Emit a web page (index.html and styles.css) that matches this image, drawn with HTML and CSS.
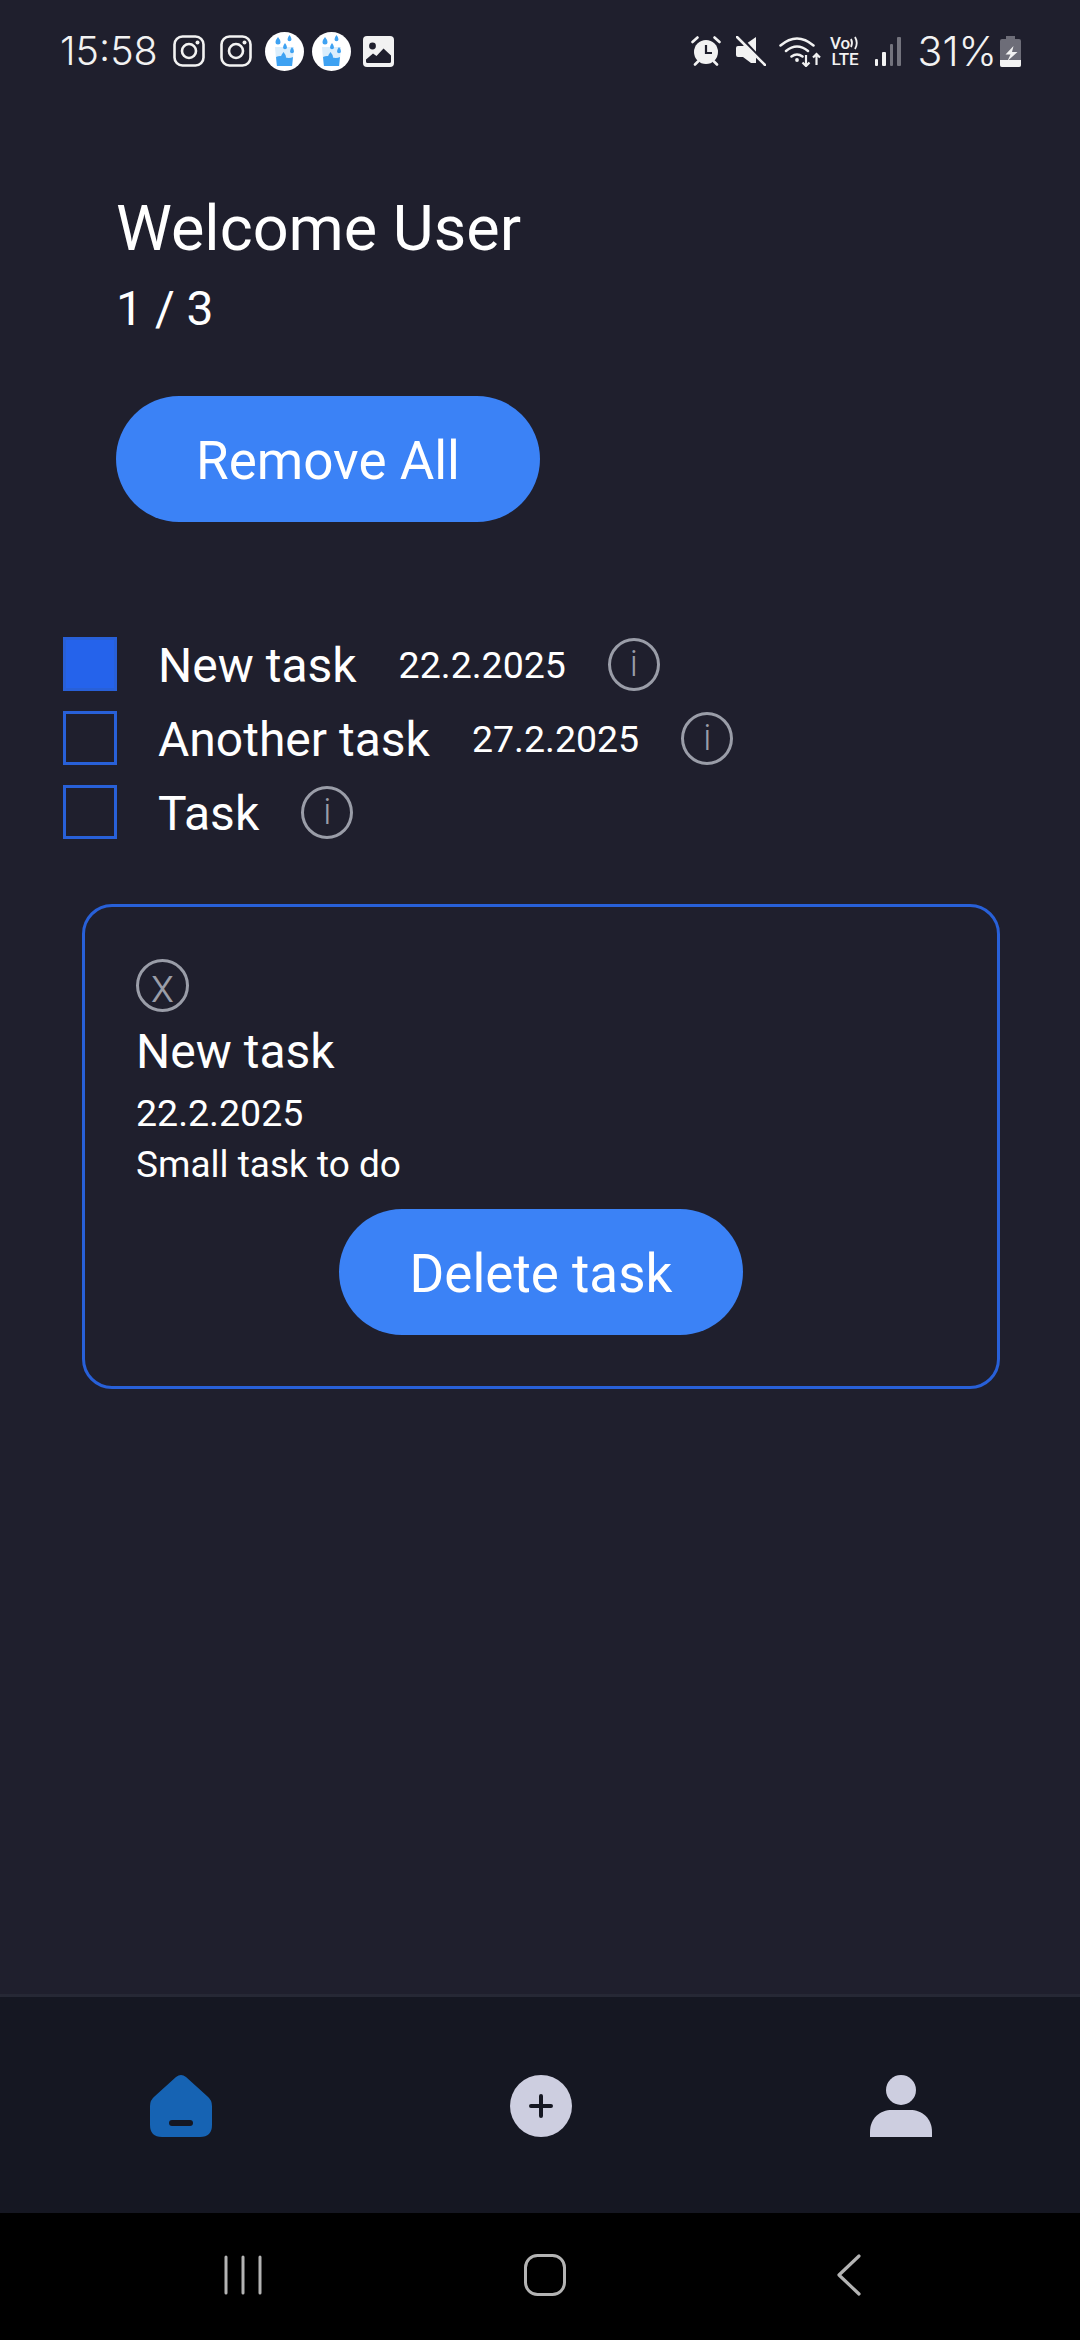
FILE: index.html

```html
<!DOCTYPE html>
<html lang="en">
<head>
<meta charset="UTF-8">
<meta name="viewport" content="width=device-width, initial-scale=1.0">
<title>Tasks</title>
<link rel="stylesheet" href="styles.css">
</head>
<body>
  <div class="status-bar">
    <div class="status-left">
      <span class="clock">15:58</span>
      <svg class="ic-insta" viewBox="0 0 32 32"><rect x="1.500" y="1.500" width="29" height="29" rx="8" fill="none" stroke="#f2f2f2" stroke-width="2.600"/><circle cx="16" cy="16" r="7" fill="none" stroke="#f2f2f2" stroke-width="2.600"/><circle cx="24.500" cy="7.500" r="2" fill="#f2f2f2"/></svg>
      <svg class="ic-insta" viewBox="0 0 32 32"><rect x="1.500" y="1.500" width="29" height="29" rx="8" fill="none" stroke="#f2f2f2" stroke-width="2.600"/><circle cx="16" cy="16" r="7" fill="none" stroke="#f2f2f2" stroke-width="2.600"/><circle cx="24.500" cy="7.500" r="2" fill="#f2f2f2"/></svg>
      <svg class="ic-water" viewBox="0 0 39 39"><circle cx="19.500" cy="19.500" r="19.500" fill="#fff"/><path d="M10 15h19l-1.600 19h-15.800z" fill="#dbeefc"/><path d="M11 25q4-2 8.500 0t8.500 0l-1 9h-15z" fill="#3ea2f2"/><path d="M13 5q2.500 3 2.500 5a2.500 2.500 0 0 1-5 0q0-2 2.500-5zM24.500 3q2 2.500 2 4.300a2 2 0 0 1-4 0q0-1.800 2-4.300zM20 11q2 2.500 2 4.300a2 2 0 0 1-4 0q0-1.800 2-4.300zM27 15q2 2.500 2 4.300a2 2 0 0 1-4 0q0-1.800 2-4.300zM18.500 20q2.500 3 2.500 5a2.500 2.500 0 0 1-5 0q0-2 2.500-5z" fill="#3ea2f2"/></svg>
      <svg class="ic-water" viewBox="0 0 39 39"><circle cx="19.500" cy="19.500" r="19.500" fill="#fff"/><path d="M10 15h19l-1.600 19h-15.800z" fill="#dbeefc"/><path d="M11 25q4-2 8.500 0t8.500 0l-1 9h-15z" fill="#3ea2f2"/><path d="M13 5q2.500 3 2.500 5a2.500 2.500 0 0 1-5 0q0-2 2.500-5zM24.500 3q2 2.500 2 4.300a2 2 0 0 1-4 0q0-1.800 2-4.300zM20 11q2 2.500 2 4.300a2 2 0 0 1-4 0q0-1.800 2-4.300zM27 15q2 2.500 2 4.300a2 2 0 0 1-4 0q0-1.800 2-4.300zM18.500 20q2.500 3 2.500 5a2.500 2.500 0 0 1-5 0q0-2 2.500-5z" fill="#3ea2f2"/></svg>
      <svg class="ic-image" viewBox="0 0 31 31"><rect width="31" height="31" rx="4" fill="#f2f2f2"/><circle cx="9.500" cy="10" r="3.400" fill="#1f1f2d"/><path d="M3 25.500v-2l7-6 3.500 2.500 7-7.500 7.500 7v6q0 1.500-1.500 1.500h-22q-1.500 0-1.500-1.500z" fill="#1f1f2d"/></svg>
    </div>
    <div class="status-right">
      <svg class="ic-alarm" viewBox="0 0 30 30"><circle cx="15" cy="16" r="12" fill="#f2f2f2"/><path d="M15 9v8h6" fill="none" stroke="#1f1f2d" stroke-width="2.200"/><path d="M1.500 6l5-4.500M28.500 6l-5-4.500M4 28.500l3-3M26 28.500l-3-3" stroke="#f2f2f2" stroke-width="2.600" stroke-linecap="round"/></svg>
      <svg class="ic-mute" viewBox="0 0 30 30"><path d="M0 12q0-2 2-2h5l13-9v26l-5 0-8-6h-5q-2 0-2-2z" fill="#f2f2f2"/><path d="M3 0l27 29" stroke="#1f1f2d" stroke-width="3.500"/><path d="M1 1l28 28" stroke="#f2f2f2" stroke-width="2.600" stroke-linecap="round"/></svg>
      <svg class="ic-wifi" viewBox="0 0 42 31"><path d="M1.500 9.500q16.500-14 33 0M7 15q11-9 22 0M12.500 20.500q5.500-4 11 0" fill="none" stroke="#f2f2f2" stroke-width="2.500" stroke-linecap="round"/><circle cx="18" cy="24" r="1.900" fill="#f2f2f2"/><path d="M27 19v11M23.500 26.500l3.500 3.500 3.500-3.500M37.500 29v-11M34 21.500l3.500-3.500 3.500 3.500" fill="none" stroke="#f2f2f2" stroke-width="2.200"/></svg>
      <div class="volte">
        <span class="volte-top">Vo<svg class="volte-waves" viewBox="0 0 10 14"><path d="M1 3q2 4 0 8M5 1q3.500 6 0 12" fill="none" stroke="#f2f2f2" stroke-width="1.800"/></svg></span>
        <span class="volte-bottom">LTE</span>
      </div>
      <div class="signal">
        <span class="bar bar-1"></span>
        <span class="bar bar-2"></span>
        <span class="bar bar-3 dim"></span>
        <span class="bar bar-4 dim"></span>
      </div>
      <span class="battery-text">31%</span>
      <svg class="ic-battery" viewBox="0 0 21 31"><path d="M6 0h9v3h4q2 0 2 2v24q0 2-2 2h-17q-2 0-2-2v-24q0-2 2-2h4z" fill="#6d6d78"/><path d="M0 24h21v5q0 2-2 2h-17q-2 0-2-2z" fill="#f2f2f2"/><path d="M13.500 10l-8 8.500h5l-3 6.500 10-9h-5.500z" fill="#f2f2f2"/></svg>
    </div>
  </div>

  <main class="content">
    <div class="header">
      <h1 class="welcome">Welcome User</h1>
      <div class="count">1 / 3</div>
      <button class="btn btn-remove">Remove All</button>
    </div>

    <ul class="task-list">
      <li class="task">
        <span class="check checked"></span>
        <span class="task-name">New task</span>
        <span class="task-date">22.2.2025</span>
        <span class="round-btn">i</span>
      </li>
      <li class="task">
        <span class="check"></span>
        <span class="task-name">Another task</span>
        <span class="task-date">27.2.2025</span>
        <span class="round-btn">i</span>
      </li>
      <li class="task">
        <span class="check"></span>
        <span class="task-name">Task</span>
        <span class="round-btn">i</span>
      </li>
    </ul>

    <section class="detail">
      <span class="round-btn close-btn">x</span>
      <div class="detail-name">New task</div>
      <div class="detail-text">22.2.2025</div>
      <div class="detail-text detail-desc">Small task to do</div>
      <button class="btn btn-delete">Delete task</button>
    </section>
  </main>

  <nav class="tabs">
    <svg class="tab-icon" viewBox="0 0 62 62"><path d="M26 2q5-4 10 0l21 19q5 4 5 10v19q0 12-12 12h-38q-12 0-12-12v-19q0-6 5-10z" fill="#1663b3"/><rect x="19" y="45" width="24" height="6" rx="3" fill="#151722"/></svg>
    <svg class="tab-icon" viewBox="0 0 62 62"><circle cx="31" cy="31" r="31" fill="#cdcee0"/><path d="M31 21v20M21 31h20" stroke="#151722" stroke-width="4" stroke-linecap="round"/></svg>
    <svg class="tab-icon" viewBox="0 0 62 62"><circle cx="31" cy="15" r="15" fill="#cdcee0"/><path d="M0 63v-6c0-14 10-22 22-22h18c12 0 22 8 22 22v6z" fill="#cdcee0"/></svg>
  </nav>

  <div class="sys-nav">
    <svg class="sys-recent" viewBox="0 0 38 40"><path d="M2 2v36M19 2v36M36 2v36" stroke="#b4b4b4" stroke-width="3" stroke-linecap="round"/></svg>
    <svg class="sys-home" viewBox="0 0 42 42"><rect x="1.500" y="1.500" width="39" height="39" rx="12" fill="none" stroke="#b4b4b4" stroke-width="3"/></svg>
    <svg class="sys-back" viewBox="0 0 24 42"><path d="M22 2l-20 19 20 19" fill="none" stroke="#b4b4b4" stroke-width="3.200" stroke-linecap="round" stroke-linejoin="round"/></svg>
  </div>
</body>
</html>
```

FILE: styles.css

```css
* {
  box-sizing: border-box;
}

body {
  margin: 0;
  width: 1080px;
  height: 2340px;
  display: flex;
  flex-direction: column;
  font-family: Roboto, sans-serif;
  background-color: #1f1f2d;
  color: #fff;
  overflow: hidden;
}

/* status bar */
.status-bar {
  height: 102px;
  padding: 0 59px 0 60px;
  display: flex;
  justify-content: space-between;
  align-items: center;
  color: #f2f2f2;
}

.status-left,
.status-right {
  display: flex;
  align-items: center;
}

.clock {
  font-family: Inter, Roboto, sans-serif;
  font-size: 39.500px;
  font-weight: 300;
  margin-right: 15px;
}

.ic-insta {
  width: 32px;
  height: 32px;
  margin-right: 15px;
}

.ic-insta + .ic-water {
  margin-left: -2px;
}

.ic-water {
  width: 39px;
  height: 39px;
  margin-right: 8px;
}

.ic-water + .ic-image {
  margin-left: 4px;
}

.ic-image {
  width: 31px;
  height: 31px;
}

.ic-alarm {
  width: 30px;
  height: 30px;
  margin-right: 15px;
}

.ic-mute {
  width: 30px;
  height: 30px;
  margin-right: 13px;
}

.ic-wifi {
  width: 42px;
  height: 31px;
  margin-right: 8px;
}

.volte {
  width: 33px;
  display: flex;
  flex-direction: column;
  align-items: center;
  font-size: 17px;
  line-height: 16px;
  font-weight: 500;
  margin-right: 13px;
}

.volte-top {
  display: flex;
  align-items: center;
}

.volte-waves {
  width: 10px;
  height: 14px;
}

.signal {
  display: flex;
  align-items: flex-end;
  gap: 4px;
  height: 30px;
  margin-right: 17px;
}

.bar {
  width: 3.500px;
  border-radius: 1px;
  background-color: #f2f2f2;
}

.bar.dim {
  background-color: #73737d;
}

.bar-1 { height: 7px; }
.bar-2 { height: 14px; }
.bar-3 { height: 22px; }
.bar-4 { height: 29px; }

.battery-text {
  font-family: Inter, Roboto, sans-serif;
  font-size: 41px;
  font-weight: 300;
  margin-right: 3px;
}

.ic-battery {
  width: 21px;
  height: 31px;
}

/* main */
.content {
  flex: 1;
}

.header {
  padding: 92px 0 0 116px;
}

.welcome {
  margin: 0;
  font-size: 63px;
  font-weight: 400;
  line-height: 70px;
}

.count {
  font-size: 48px;
  line-height: 54px;
  margin-top: 18px;
}

.btn {
  display: block;
  height: 126px;
  border: none;
  border-radius: 63px;
  background-color: #3b82f6;
  color: #fff;
  font-family: Roboto, sans-serif;
  font-size: 53px;
  padding: 4px 0 0;
}

.btn-remove {
  width: 424px;
  margin: 60px 0 0;
}

.task-list {
  list-style-type: none;
  margin: 115px 0 0;
  padding: 0 0 0 63px;
  display: flex;
  flex-direction: column;
  gap: 20px;
}

.task {
  height: 54px;
  display: flex;
  align-items: center;
}

.check {
  width: 54px;
  height: 54px;
  border: 3px solid #2860d8;
  margin-right: 41px;
}

.check.checked {
  background-color: #2563eb;
}

.task-name {
  font-size: 48px;
  margin-right: 42px;
  padding-top: 2px;
}

.task-date {
  font-size: 37.500px;
  margin-right: 42px;
  padding-top: 2px;
}

.round-btn {
  width: 52px;
  height: 53px;
  border: 3px solid #9a9da8;
  border-radius: 50%;
  display: flex;
  justify-content: center;
  align-items: center;
  color: #9a9da8;
  font-size: 36px;
  font-weight: 300;
}

.detail {
  margin: 65px 0 0 82px;
  width: 918px;
  height: 485px;
  border: 3px solid #2860d8;
  border-radius: 30px;
  padding: 52px 51px 0;
}

.close-btn {
  width: 53px;
  height: 53px;
  line-height: 1;
  font-size: 48px;
}

.detail-name {
  font-size: 48px;
  line-height: 56px;
  margin-top: 12px;
}

.detail-text {
  font-size: 37.500px;
  line-height: 51px;
}

.detail-desc {
  font-size: 37px;
}

.detail-name + .detail-text {
  margin-top: 8px;
}

.btn-delete {
  width: 404px;
  margin: 19px auto 0;
}

/* bottom tabs */
.tabs {
  height: 219px;
  border-top: 3px solid #262835;
  background-color: #151722;
  display: flex;
  align-items: flex-start;
  padding: 78px 0 0;
}

.tab-icon {
  width: 62px;
  height: 62px;
}

.tab-icon:nth-child(1) { margin-left: 150px; }
.tab-icon:nth-child(2) { margin-left: 298px; }
.tab-icon:nth-child(3) { margin-left: 298px; }

/* android nav */
.sys-nav {
  height: 127px;
  background-color: #000;
  display: flex;
  align-items: center;
  padding-bottom: 3px;
}

.sys-recent {
  width: 38px;
  height: 40px;
  margin-left: 224px;
}

.sys-home {
  width: 42px;
  height: 42px;
  margin-left: 262px;
}

.sys-back {
  width: 24px;
  height: 42px;
  margin-left: 271px;
}
```
